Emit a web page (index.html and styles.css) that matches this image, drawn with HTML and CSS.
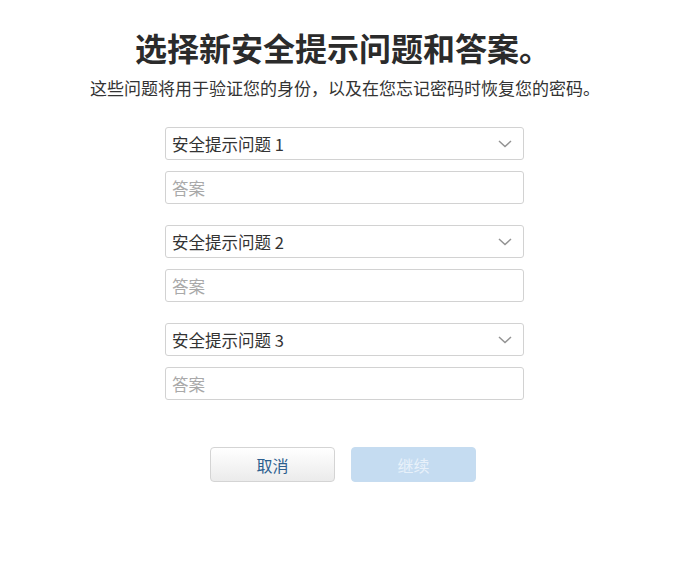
FILE: index.html
```html
<!DOCTYPE html>
<html lang="zh-CN">
<head>
<meta charset="utf-8">
<title>选择新安全提示问题和答案</title>
<link rel="stylesheet" href="styles.css">
</head>
<body>
<main class="page">
  <h1 class="title">选择新安全提示问题和答案。</h1>
  <p class="subtitle">这些问题将用于验证您的身份，以及在您忘记密码时恢复您的密码。</p>
  <div class="form">
    <div class="group">
      <div class="select"><span>安全提示问题 1</span><svg class="chev" width="14" height="8" viewBox="0 0 14 8"><polyline points="1,1 7,6.5 13,1" fill="none" stroke="#939393" stroke-width="1.5"/></svg></div>
      <input class="answer" type="text" placeholder="答案">
    </div>
    <div class="group">
      <div class="select"><span>安全提示问题 2</span><svg class="chev" width="14" height="8" viewBox="0 0 14 8"><polyline points="1,1 7,6.5 13,1" fill="none" stroke="#939393" stroke-width="1.5"/></svg></div>
      <input class="answer" type="text" placeholder="答案">
    </div>
    <div class="group">
      <div class="select"><span>安全提示问题 3</span><svg class="chev" width="14" height="8" viewBox="0 0 14 8"><polyline points="1,1 7,6.5 13,1" fill="none" stroke="#939393" stroke-width="1.5"/></svg></div>
      <input class="answer" type="text" placeholder="答案">
    </div>
  </div>
  <div class="actions">
    <button class="btn btn-cancel">取消</button>
    <button class="btn btn-continue">继续</button>
  </div>
</main>
</body>
</html>
```

FILE: styles.css
```css
html, body {
  margin: 0;
  padding: 0;
  background: #ffffff;
}
body {
  font-family: "Noto Sans CJK SC", "Liberation Sans", sans-serif;
  color: #333333;
}
.page {
  display: flex;
  flex-direction: column;
  align-items: center;
  padding-top: 28px;
}
.title {
  margin: 0;
  font-size: 32px;
  line-height: 39px;
  font-weight: 700;
  color: #2b2b2b;
}
.subtitle {
  margin: 9px 0 0 4px;
  font-size: 17px;
  line-height: 24px;
  color: #333333;
}
.form {
  margin: 27px 0 0 3px;
  width: 359px;
  display: flex;
  flex-direction: column;
  gap: 21px;
}
.group {
  display: flex;
  flex-direction: column;
  gap: 11px;
}
.select, .answer {
  box-sizing: border-box;
  width: 359px;
  height: 33px;
  border: 1px solid #d2d2d2;
  border-radius: 3px;
  background: #ffffff;
  font-family: "Noto Sans CJK SC", "Liberation Sans", sans-serif;
  font-size: 16.5px;
  padding: 0 11px 0 6px;
  margin: 0;
}
.select {
  display: flex;
  align-items: center;
  justify-content: space-between;
  color: #333333;
}
.chev {
  display: block;
  margin-top: 1px;
}
.answer {
  outline: none;
  color: #333333;
}
.answer::placeholder {
  color: #a9a9a9;
}
.actions {
  margin-top: 47px;
  display: flex;
  gap: 16px;
}
.btn {
  box-sizing: border-box;
  width: 125px;
  height: 35px;
  border-radius: 4px;
  font-family: "Noto Sans CJK SC", "Liberation Sans", sans-serif;
  font-size: 16px;
  padding: 0;
  cursor: pointer;
}
.btn-cancel {
  border: 1px solid #d4d4d4;
  background: linear-gradient(#ffffff, #ebebeb);
  color: #2d5f8f;
}
.btn-continue {
  border: 1px solid #c6dcf0;
  background: #c5dcf1;
  color: #e8f1fa;
}
```
